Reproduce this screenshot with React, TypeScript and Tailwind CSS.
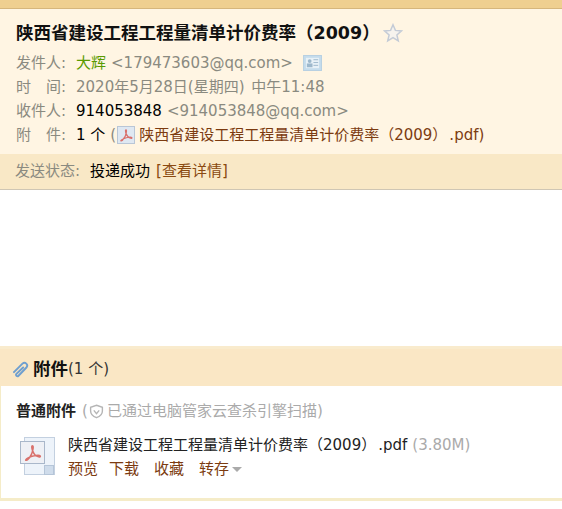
import React from 'react';

const PdfGlyph: React.FC<{ className?: string }> = ({ className }) => (
  <svg viewBox="0 0 20 20" className={className} fill="none">
    <path d="M10 3.500c-.9 0-.9 2 .2 5 1 2.600 3 5 5.600 5.600 1.200.3 2-.2 1.500-.9-.6-.8-3.600-.7-6.800.2C7.600 14.200 4.200 16 3.600 17c-.4.7.8.6 2-.5 2-1.800 4.400-6.500 4.900-10.200.2-1.500.2-2.800-.5-2.800Z" stroke="#d9716c" strokeWidth="1.500" />
  </svg>
);

const Label: React.FC<{ children: React.ReactNode }> = ({ children }) => (
  <span className="w-[60px] shrink-0 text-[#8a8a80]">{children}</span>
);

const App: React.FC = () => {
  return (
    <div className="w-[562px] h-[509px] overflow-hidden bg-white text-[15px] text-black font-['DejaVu_Sans','Noto_Sans_CJK_SC',sans-serif]">
      <div className="h-[9px] bg-[#efcf90] border-b border-[#d6b67c]" />
      <div className="h-[145px] bg-[#fff5e3] pl-[16px] pt-[12px]">
        <div className="flex items-center h-[24px] text-[17.5px] font-bold text-[#111]">
          <span>陕西省建设工程工程量清单计价费率（2009）</span>
          <svg viewBox="0 0 20 20" className="w-[20px] h-[20px] ml-[3px]">
            <path d="M10 1.800 12.400 7.400 18.500 7.900 13.900 11.900 15.300 17.900 10 14.700 4.700 17.900 6.100 11.900 1.500 7.900 7.600 7.400Z" fill="#f6f3ee" stroke="#c4cbd6" strokeWidth="1.500" />
          </svg>
        </div>
        <div className="mt-[6px] flex flex-col leading-[24px]">
          <div className="flex items-center h-[24px]">
            <Label>发件人:</Label>
            <span className="text-[#5a9a00]">大辉</span>
            <span className="ml-[5px] text-[#8a8a80]">&lt;179473603@qq.com&gt;</span>
            <svg viewBox="0 0 20 17" className="w-[19px] h-[16px] ml-[10px]">
              <rect x="0.500" y="0.500" width="19" height="16" fill="#c5dcec" stroke="#b5cfe2" />
              <rect x="3" y="3" width="14" height="11" fill="#e8f1f7" />
              <circle cx="7" cy="6.500" r="2" fill="#9db8cc" />
              <rect x="4" y="9" width="6" height="4" fill="#9db8cc" />
              <path d="M11 5h5M11 8h5M11 11h5" stroke="#9db8cc" />
            </svg>
          </div>
          <div className="flex items-center h-[24px] text-[#8a8a80]">
            <span className="w-[60px] shrink-0">时<span className="ml-[15px]">间:</span></span>
            <span className="[word-spacing:2px]">2020年5月28日(星期四) 中午11:48</span>
          </div>
          <div className="flex items-center h-[24px]">
            <Label>收件人:</Label>
            <span>914053848</span>
            <span className="ml-[5px] text-[#8a8a80]">&lt;914053848@qq.com&gt;</span>
          </div>
          <div className="flex items-center h-[24px]">
            <span className="w-[60px] shrink-0 text-[#8a8a80]">附<span className="ml-[15px]">件:</span></span>
            <span>1 个</span>
            <span className="ml-[5px] text-[#8a8a80]">(</span>
            <span className="relative w-[18px] h-[18px] ml-[1px] mr-[4px] bg-[#dfe8f2] border border-[#b9c6d6]">
              <PdfGlyph className="absolute inset-0 w-full h-full" />
            </span>
            <span className="text-[#7c3b10] whitespace-nowrap">陕西省建设工程工程量清单计价费率（2009）<span className="ml-[2px]">.pdf)</span></span>
          </div>
        </div>
      </div>
      <div className="flex items-center h-[36px] pl-[15px] bg-[#f9e8c6] border-b border-[#cfc6b4]">
        <span className="text-[#8a8a80]">发送状态:</span>
        <span className="ml-[10px]">投递成功</span>
        <span className="ml-[6px] text-[#8a4a10]">[查看详情]</span>
      </div>
      <div className="h-[156px] bg-white" />
      <div className="flex items-center h-[40px] pl-[12px] pt-[3px] bg-[#fae7c5] border-t-[3px] border-[#f9ebcd]">
        <svg viewBox="1 1 13 13" className="w-[17px] h-[17px]" fill="none">
          <path d="M2.500 9.500 9 3c2-1.800 4.800.8 3 3l-6 6.300c-1 1-2.600-.4-1.600-1.500L9.500 6" stroke="#6f9fcf" strokeWidth="1.500" strokeLinecap="round" />
        </svg>
        <span className="ml-[4px] text-[17.5px] font-bold text-[#111]">附件</span>
        <span className="text-[15px] text-[#333]">(1 个)</span>
      </div>
      <div className="h-[112px] bg-white border-l border-[#f5ecc8] pl-[15px] pt-[15px]">
        <div className="flex items-center h-[20px]">
          <span className="font-bold text-[#222]">普通附件</span>
          <span className="ml-[6px] text-[#aaaaaa]">(</span>
          <svg viewBox="0 0 14 14" className="w-[15px] h-[15px] ml-[1px]" fill="none">
            <path d="M7 1.200 12.500 3v3.500c0 3-2.500 5.200-5.500 6.300-3-1.100-5.500-3.300-5.500-6.300V3Z" stroke="#b5b5b5" strokeWidth="1.300" />
            <path d="m4.500 6 2.500 3 2.500-3" stroke="#b5b5b5" strokeWidth="1.300" />
          </svg>
          <span className="ml-[3px] text-[#aaaaaa]">已通过电脑管家云查杀引擎扫描)</span>
        </div>
        <div className="flex mt-[12px]">
          <span className="relative w-[38px] h-[40px] ml-[3px] mt-[4px] mr-[11px] shrink-0">
            <span className="absolute left-[5px] top-0 w-[31px] h-[38px] bg-[#edf3fa] border border-[#c3d0e0]" />
            <span className="absolute right-[3px] bottom-[2px] w-[10px] h-[10px] bg-[#cfdceb] border border-[#b5c5d8]" />
            <span className="absolute left-[1px] top-[4px] w-[25px] h-[23px] bg-[#eef0f5] border border-[#a9b7ca]">
              <PdfGlyph className="w-full h-full" />
            </span>
          </span>
          <div className="flex flex-col">
            <div className="h-[24px] flex items-center whitespace-nowrap text-[#222]">
              <span>陕西省建设工程工程量清单计价费率（2009）<span className="ml-[2px]">.pdf</span></span>
              <span className="ml-[5px] text-[#aaaaaa]">(3.80M)</span>
            </div>
            <div className="h-[24px] flex items-center text-[#7c3b10]">
              <span>预览</span>
              <span className="ml-[11px]">下载</span>
              <span className="ml-[15px]">收藏</span>
              <span className="ml-[15px]">转存</span>
              <span className="ml-[3px] w-0 h-0 border-x-[5px] border-x-transparent border-t-[5px] border-t-[#aaaaaa]" />
            </div>
          </div>
        </div>
      </div>
      <div className="h-[3px] bg-[#f5ecc8]" />
    </div>
  );
};

export default App;
